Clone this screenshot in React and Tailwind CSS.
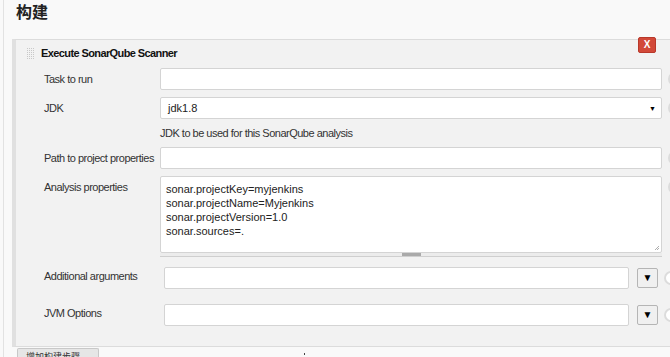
import React from 'react'

const FONT = { fontFamily: '"Liberation Sans", Arial, "Noto Sans CJK SC", sans-serif' }

function Help() {
  return <span className="ml-[6px] mt-[4px] w-[14px] h-[14px] shrink-0 rounded-full border-2 border-[#dcdcdc] bg-white" />
}

function Grip() {
  const dots = []
  for (let r = 0; r < 6; r++) {
    for (let c = 0; c < 4; c++) {
      dots.push(<rect key={`${r}-${c}`} x={c * 2} y={r * 2} width="1" height="1" fill="#c8c8c8" />)
    }
  }
  return (
    <svg width="8" height="12" viewBox="0 0 8 12" className="shrink-0">
      {dots}
    </svg>
  )
}

function TextRow({ label, mt }) {
  return (
    <div className={`flex items-start ${mt}`}>
      <div className="w-[144px] shrink-0 pl-[28px] whitespace-nowrap text-[11px] tracking-[-0.5px] text-[#333] leading-[22px]">{label}</div>
      <div className="w-[502px] h-[22px] shrink-0 bg-white border border-[#d4d4d4] rounded-[2px]" />
      <Help />
    </div>
  )
}

function ExpandRow({ label, mt }) {
  return (
    <div className={`flex items-start ${mt}`}>
      <div className="w-[148px] shrink-0 pl-[28px] whitespace-nowrap text-[11px] tracking-[-0.5px] text-[#333] leading-[16px] pt-[1px]">{label}</div>
      <div className="w-[465px] h-[22px] shrink-0 bg-white border border-[#d4d4d4] rounded-[2px]" />
      <div className="ml-[8px] mt-[1px] w-[21px] h-[20px] shrink-0 flex items-center justify-center bg-[#f0f0f0] border border-[#b5b5b5] rounded-[2px]">
        <span className="text-[10px] leading-none text-black">▼</span>
      </div>
      <Help />
    </div>
  )
}

export default function App() {
  return (
    <div className="w-[670px] h-[357px] overflow-hidden bg-[#f9f9f9]" style={FONT}>
      <div className="w-[700px] h-[357px] ml-[3px] border-l border-[#e2e2e2]">
        <h2 className="pl-[12px] pt-[3px] h-[39px] text-[16px] font-bold leading-[20px] text-[#222]">构建</h2>
        <div className="relative ml-[8px] h-[308px] bg-[#f2f2f2] border-t border-b border-[#dcdcdc] border-l-4 border-l-[#e0e0e0]">
          <div className="absolute top-[-3px] left-[622px] w-[18px] h-[16px] bg-[#d24939] border border-[#b8382a] rounded-[2px] flex items-center justify-center text-white text-[10px] font-bold leading-none">
            X
          </div>
          <div className="flex items-center pl-[11px] h-[27px]">
            <Grip />
            <span className="ml-[6px] text-[11px] tracking-[-0.6px] font-bold text-[#111]">Execute SonarQube Scanner</span>
          </div>
          <TextRow label="Task to run" mt="mt-[1px]" />
          <div className="flex items-start mt-[7px]">
            <div className="w-[144px] shrink-0 pl-[28px] text-[11px] tracking-[-0.5px] text-[#333] leading-[22px]">JDK</div>
            <div className="w-[502px] h-[22px] shrink-0 bg-white border border-[#d4d4d4] rounded-[2px] flex items-center justify-between pl-[7px] pr-[5px]">
              <span className="text-[11px] text-[#222]">jdk1.8</span>
              <span className="text-[7px] leading-none text-black">▼</span>
            </div>
            <Help />
          </div>
          <div className="pl-[144px] mt-[7px] text-[11px] tracking-[-0.5px] text-[#333] leading-[14px]">JDK to be used for this SonarQube analysis</div>
          <TextRow label="Path to project properties" mt="mt-[7px]" />
          <div className="flex items-start mt-[7px]">
            <div className="w-[144px] shrink-0 pl-[28px] whitespace-nowrap text-[11px] tracking-[-0.5px] text-[#333] leading-[16px] pt-[3px]">Analysis properties</div>
            <div className="w-[502px] shrink-0">
              <div className="relative h-[77px] bg-white border border-[#d4d4d4] rounded-[2px] pl-[5px] pt-[5px] text-[11px] leading-[14px] text-[#222]">
                <div>sonar.projectKey=myjenkins</div>
                <div>sonar.projectName=Myjenkins</div>
                <div>sonar.projectVersion=1.0</div>
                <div>sonar.sources=.</div>
                <svg width="6" height="6" viewBox="0 0 6 6" className="absolute right-[1px] bottom-[1px]">
                  <path d="M5 1 L1 5 M5 3 L3 5" stroke="#999" strokeWidth="0.8" />
                </svg>
              </div>
              <div className="h-[4px] bg-[#ececec] border-b border-[#cfcfcf] flex justify-center">
                <div className="w-[19px] h-[3px] bg-[#aaa]" />
              </div>
            </div>
            <Help />
          </div>
          <ExpandRow label="Additional arguments" mt="mt-[10px]" />
          <ExpandRow label="JVM Options" mt="mt-[15px]" />
        </div>
        <div className="flex items-start">
          <div className="ml-[13px] mt-[1px] w-[82px] h-[10px] bg-[#e6e6e6] border border-[#c8c8c8] border-b-0 rounded-t-[2px] pl-[8px] pt-[4px] text-[9px] leading-[9px] text-[#333] overflow-hidden whitespace-nowrap">
            增加构建步骤
          </div>
          <div className="ml-[205px] mt-[6px] w-[1px] h-[2px] bg-[#444]" />
        </div>
      </div>
    </div>
  )
}
